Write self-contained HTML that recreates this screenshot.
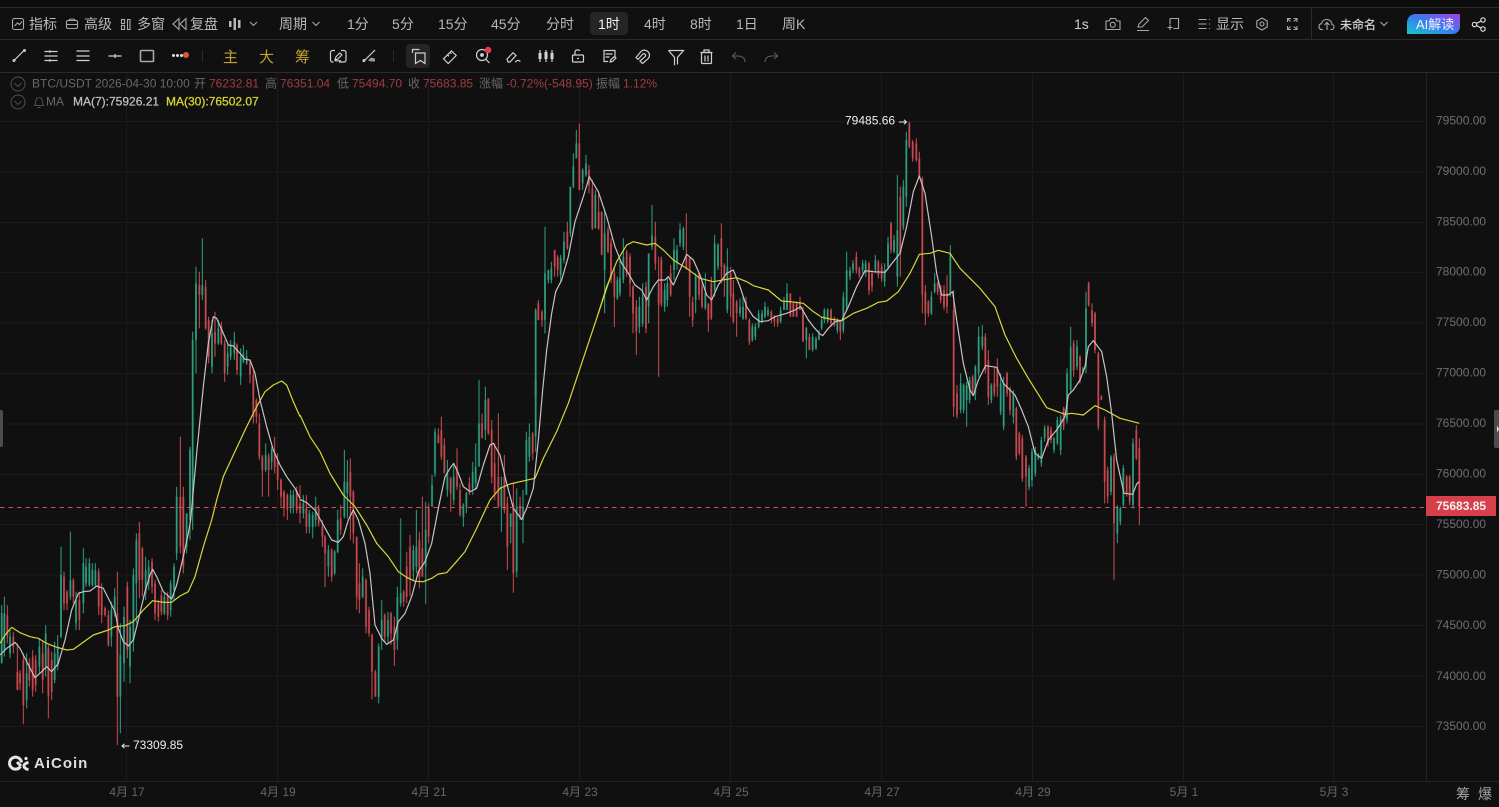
<!DOCTYPE html>
<html lang="zh"><head><meta charset="utf-8"><title>BTC/USDT</title>
<style>
html,body{margin:0;padding:0;background:#101011;width:1499px;height:807px;overflow:hidden}
svg{display:block}
text{font-family:"Liberation Sans","Noto Sans CJK SC",sans-serif}
.t{font-size:14px;fill:#b8b8b8}
.ic{fill:none;stroke:#a8a8a8;stroke-width:1.1}
.id{fill:none;stroke:#d0d0d0;stroke-width:1.2}
.o{font-size:12px;fill:#68686b}
.r{font-size:12px;fill:#a23c40}
.a{font-size:12px;fill:#6f6f74}
.d{font-size:12px;fill:#66666a;text-anchor:middle}
.gw{fill:none;stroke:#2fa385;stroke-width:3}
.gb{fill:none;stroke:#2d9c7f;stroke-width:5.4}
.rw{fill:none;stroke:#cf4c51;stroke-width:3}
.rb{fill:none;stroke:#c6494e;stroke-width:5.4}
.w{fill:none;stroke:#c8c2c4;stroke-width:3.6;stroke-linejoin:round}
.y{fill:none;stroke:#d9d63a;stroke-width:3.6;stroke-linejoin:round}
</style></head><body>
<svg width="1499" height="807" viewBox="0 0 1499 807" xmlns="http://www.w3.org/2000/svg">
<defs>
<linearGradient id="ai" x1="0" y1="1" x2="1" y2="0"><stop offset="0" stop-color="#16c8c8"/><stop offset=".5" stop-color="#3a7cf0"/><stop offset="1" stop-color="#a63ee0"/></linearGradient>
</defs>
<rect width="1499" height="807" fill="#101011"/>
<rect width="1499" height="7" fill="#0d0d0e"/>
<path d="M0 7.500H1499M0 39.500H1499M0 72.500H1499" stroke="#2b2b2c" stroke-width="1"/>
<path d="M1311.500 8V39" stroke="#2b2b2c"/>

<!-- grid -->
<path d="M0 121.500H1426M0 172H1426M0 222.500H1426M0 272.500H1426M0 323H1426M0 373.500H1426M0 424H1426M0 474.500H1426M0 524.500H1426M0 575H1426M0 625.500H1426M0 676H1426M0 726.500H1426M126.500 73V781M277.500 73V781M428.500 73V781M579.500 73V781M730.500 73V781M881.500 73V781M1032.500 73V781M1183.500 73V781M1333.500 73V781" stroke="#1b1b1c" stroke-width="1" fill="none"/>
<path d="M1426.500 73V781M0 781.500H1499" stroke="#232324" stroke-width="1" fill="none"/>

<!-- toolbar row 1 -->
<rect x="590" y="12" width="38" height="23" rx="4" fill="#252526"/>
<g class="ic"><rect x="12.500" y="18.500" width="11" height="11" rx="2"/><path d="M14.500 26l3-3 2 1.500 2.500-3"/></g>
<text class="t" x="29" y="29">指标</text>
<g class="ic"><rect x="66.500" y="20.500" width="11" height="8" rx="1.500"/><path d="M66.500 24.500h11M69 20.500c0-2 6-2 6 0"/></g>
<text class="t" x="84" y="29">高级</text>
<g class="ic"><rect x="121.500" y="19.500" width="3" height="4"/><rect x="121.500" y="25.500" width="3" height="4"/><rect x="127.500" y="19.500" width="2.500" height="10"/></g>
<text class="t" x="137" y="29">多窗</text>
<g class="ic"><path d="M179 18.500l-6 5.500 6 5.500zM186 18.500l-6 5.500 6 5.500z"/></g>
<text class="t" x="190" y="29">复盘</text>
<g fill="#b8b8b8"><rect x="229" y="21" width="2.500" height="6"/><rect x="233.500" y="18" width="2.500" height="12"/><rect x="238" y="20" width="2.500" height="8"/></g>
<path class="ic" d="M250 22l3.500 3.500 3.500-3.500M312.500 22l3.500 3.500 3.500-3.500M1380.500 22l3.500 3.500 3.500-3.500"/>
<text class="t" x="279" y="29">周期</text>
<text class="t" x="347" y="29">1分</text>
<text class="t" x="392" y="29">5分</text>
<text class="t" x="438" y="29">15分</text>
<text class="t" x="491" y="29">45分</text>
<text class="t" x="546" y="29">分时</text>
<text class="t" x="598" y="29" style="fill:#f2f2f2">1时</text>
<text class="t" x="644" y="29">4时</text>
<text class="t" x="690" y="29">8时</text>
<text class="t" x="736" y="29">1日</text>
<text class="t" x="782" y="29">周K</text>
<!-- right of row 1 -->
<text class="t" x="1074" y="29" style="fill:#cfcfcf">1s</text>
<g class="ic"><path d="M1106 21h3l1.500-2.500h5l1.500 2.500h3v8.500h-14z"/><circle cx="1112.800" cy="24.800" r="2.500"/></g>
<path class="ic" d="M1138 27l1-3 6.500-6.500 3 3-6.500 6.500zM1137 30.500h12"/>
<path class="ic" d="M1170 18.500h8.500v10h-5M1170 18.500v6M1167.500 27.500h5M1170 25v5"/>
<path class="ic" d="M1198.500 19.500h8M1198.500 24h8M1198.500 28.500h8M1209 19.500h1M1209 24h1M1209 28.500h1"/>
<text class="t" x="1216" y="29">显示</text>
<g class="ic"><path d="M1262 18l5.200 3v6l-5.200 3-5.200-3v-6z"/><circle cx="1262" cy="24" r="2"/></g>
<path class="ic" d="M1287.500 22v-3.500h3.500M1293.500 18.500h3.500v3.500M1287.500 26v3.500h3.500M1293.500 29.500h3.500V26M1288 19l2.500 2.500M1296.500 19l-2.500 2.500M1288 29l2.500-2.500M1296.500 29l-2.500-2.500"/>
<path class="ic" d="M1323 29.500h-1.500c-2 0-2.500-1.500-2.500-3 0-1.600 1-2.700 2.500-2.800.5-2.500 2.500-4.200 5-4.200 3.200 0 5.500 2.300 5.500 5 1.500.3 2 1.500 2 2.500 0 1.300-1 2.500-2.500 2.500h-1M1327 30v-7.500M1324.500 25l2.500-2.500 2.500 2.500"/>
<text x="1340" y="29" style="font-size:12px;fill:#d4d4d4;stroke:#d4d4d4;stroke-width:.2">未命名</text>
<path d="M1416 14h44v12c0 5-3 8-8 8h-45v-11c0-5 3-9 9-9z" fill="url(#ai)"/>
<text x="1416" y="29" style="font-size:13px;fill:#f4f4ff">AI解读</text>
<g fill="none" stroke="#dcdcdc" stroke-width="1.2"><circle cx="1483" cy="20" r="2.200"/><circle cx="1483" cy="29" r="2.200"/><circle cx="1474.500" cy="24.500" r="2.200"/><path d="M1476.500 23.400l4.600-2.400M1476.500 25.600l4.600 2.400"/></g>

<!-- toolbar row 2 -->
<g class="id">
<path d="M14 60.500l10-10"/><circle cx="14" cy="60.500" r=".9"/><circle cx="24.500" cy="50.500" r=".9"/>
<path d="M44.500 51.500h13M44.500 56h13M44.500 60.500h13"/><path d="M50 50.500v2M50 59.500v2" stroke-width="2"/>
<path d="M76.500 51h13M76.500 56h13M76.500 60.500h13"/>
<path d="M108.500 56h13M115 54v4"/>
<rect x="140.500" y="50.500" width="13" height="11" rx="1" stroke="#a8a8a8" stroke-width="1.600"/>
</g>
<g fill="#e0e0e0"><circle cx="173.500" cy="55.500" r="1.500"/><circle cx="177.500" cy="55.500" r="1.500"/><circle cx="181.500" cy="55.500" r="1.500"/></g>
<circle cx="186" cy="55" r="3" fill="#e5533c"/>
<path d="M202.500 50v12M393.500 50v12" stroke="#2c2c2d"/>
<text x="223" y="62" style="font-size:15px;fill:#bfa030">主</text>
<text x="259" y="62" style="font-size:15px;fill:#bfa030">大</text>
<text x="295" y="62" style="font-size:15px;fill:#bfa030">筹</text>
<g class="id">
<path d="M335 50.500h-2.500a2 2 0 0 0-2 2v7.500a2 2 0 0 0 2 2h1M341 50.500h3a2 2 0 0 1 2 2v7.500a2 2 0 0 1-2 2h-5"/>
<path d="M335 60l.8-3 4-4 2 2-4 4zM335 60.800h6"/>
<path d="M363 62l12-12" /><circle cx="364" cy="60.500" r=".9"/>
<path d="M368 60.500l3-3 4 1v3h-4z" fill="#999" stroke="none"/>
</g>
<rect x="406" y="44" width="24" height="24" rx="4" fill="#252526"/>
<g class="id">
<path d="M412.500 53v-3.500h7M415.500 53h9.500v10.500l-4.500-3-5 3z"/>
<path d="M443.500 58.800l8-8 4.700 4.700-8 8z"/><path d="M447.500 54.800l1.500 1.500M450 52.300l1.500 1.500"/>
<circle cx="482" cy="55" r="5.500"/><path d="M486 59.500l3.500 3.500"/><circle cx="482" cy="55" r="1.300" fill="#d4d4d4"/>
<path d="M508 62l-1-2.800 6-6.500 3 2.800-6 6.500zM515 61.800c1.500 0 1.500-1.500 3-1.500s1 1 2.500 1"/>
<path d="M540 50v12M546 50v12M552 50v12"/>
</g>
<g fill="#d4d4d4"><rect x="538.500" y="53" width="3" height="6"/><rect x="544.500" y="52" width="3" height="7"/><rect x="550.500" y="53" width="3" height="6"/></g>
<circle cx="488" cy="50" r="3.300" fill="#e8394a"/>
<g class="id">
<rect x="572.500" y="55" width="11" height="7" rx=".8"/><path d="M575 55v-3c0-2 3-3 5-1.200"/><path d="M577 58.500h2"/>
<path d="M615 57v-6.500h-11v11h4M605.500 54h7M605.500 57h4M610 62l1-2.500 3.500-3 1.500 1.500-3.500 3.500z"/>
<path d="M636 57.500l5-6c2-2 5-1.800 7 .2s2 5 0 7l-5.500 4.800-2.500-2.500 5-4.300c1-1 .7-1.800 0-2.500s-1.500-.8-2.500.2l-4.500 5z"/>
<path d="M668.500 50.500h15l-6 6.800v7.200M668.500 50.500l6 6.800v8"/>
<rect x="701.500" y="52.500" width="10" height="11" rx="1"/><path d="M700.500 52.500h12M704 52.500v-2.500h5v2.500M705 55.500v6M708 55.500v6"/>
</g>
<path d="M745 62c0-4-3-6-7-6h-5M736 52.500l-3.500 3.500 3.500 3" fill="none" stroke="#5e5e60" stroke-width="1.100"/>
<path d="M765 62c0-4 3-6 7-6h5M774 52.500l3.500 3.500-3.500 3" fill="none" stroke="#5e5e60" stroke-width="1.100"/>

<g style="filter:blur(.3px)">
<!-- candles -->
<g transform="translate(0,520) scale(.33333)">
<path class="gw" d="M5 255V430M13 230V410M30 330V415M80 400V565M118 355V460M137 315V470M164 365V490M173 345V450M183 80V355M211 35V240M228 215V330M250 85V280M258 115V200M268 115V200M277 130V200M286 130V200M334 245V380M344 205V290M361 310V640M372 260V485M390 300V490M400 145V395M409 40V310M437 110V240M446 120V210M493 215V285M512 180V290M522 130V240"/>
<path class="gb" d="M5 280V430M13 280V390M30 350V400M80 460V540M118 380V440M137 340V440M164 400V480M173 380V440M183 165V350M211 180V230M228 240V310M250 130V250M258 140V190M268 130V195M277 150V195M286 150V195M334 270V350M344 230V280M361 405V530M372 290V430M390 320V440M400 165V360M409 60V190M437 150V220M446 140V190M493 230V280M512 190V270M522 140V210"/>
<path class="rw" d="M22 255V370M40 335V400M52 370V510M60 450V510M70 400V612M88 415V500M98 390V530M107 405V515M128 365V520M145 375V595M155 395V540M192 155V270M201 210V270M220 175V250M238 215V330M296 145V285M305 190V310M315 260V290M325 270V380M352 155V675M382 185V415M418 5V235M427 80V230M456 115V220M465 180V300M475 240V305M484 210V285M503 215V300"/>
<path class="rb" d="M22 285V350M40 350V380M52 455V510M60 460V490M70 420V555M88 430V480M98 410V510M107 420V495M128 400V480M145 385V530M155 420V515M192 170V250M201 215V250M220 180V230M238 240V300M296 155V260M305 210V285M315 265V285M325 285V375M352 280V530M382 200V390M418 40V180M427 85V180M456 125V200M465 190V280M475 250V290M484 225V275M503 230V285"/>
</g>
<g transform="translate(0,220) scale(.33333)">
<path class="gw" d="M530 800V1020M560 880V1000M570 680V960M578 335V930M588 140V460M607 55V240M636 300V460M655 300V375M683 375V465M692 360V420M703 335V420M722 385V495M730 375V430M740 390V435M797 670V755M815 680V750M872 810V880M880 810V880"/>
<path class="gb" d="M530 830V1000M560 880V980M570 690V900M578 360V870M588 190V360M607 195V225M636 340V440M655 325V370M683 400V440M692 375V410M703 365V400M722 410V470M730 400V425M740 410V430M797 705V750M815 690V725M872 825V860M880 825V860"/>
<path class="rw" d="M541 650V1000M550 800V1060M598 155V325M617 180V330M626 290V430M645 275V410M664 305V375M674 360V485M711 370V465M750 420V490M760 450V610M769 535V610M778 580V720M787 705V830M806 700V830M824 650V760M833 700V810M843 775V860M852 810V890M862 820V900M890 800V880"/>
<path class="rb" d="M541 830V980M550 830V1040M598 195V225M617 200V325M626 300V410M645 335V370M664 320V370M674 370V460M711 375V450M750 430V465M760 465V590M769 540V590M778 610V710M787 710V750M806 710V750M824 700V740M833 725V780M843 780V830M852 815V860M862 825V870M890 810V870"/>
</g>
<g transform="translate(300,380) scale(.33333)">
<path class="gw" d="M10 345V415M28 390V460M38 395V475M47 350V440M85 495V590M104 510V585M113 390V520M133 210V415M142 240V415M188 565V655M236 790V970M245 660V810M264 695V790M292 620V810M302 415V680M340 495V600M349 390V580M377 365V672M396 285V380M405 145V290M442 240V350M461 250V375M490 370V440M499 335V400M518 245V345M527 190V330M537 0V260M556 20V180M604 290V455M632 400V490M650 325V592M669 330V490M679 155V345M688 130V245M707 0V215"/>
<path class="gb" d="M10 370V400M28 400V440M38 405V440M47 385V420M85 510V560M104 515V580M113 420V515M133 305V410M142 305V340M188 590V650M236 800V950M245 720V780M264 720V770M292 650V780M302 640V670M340 510V570M349 500V560M377 450V560M396 315V380M405 155V280M442 280V330M461 290V360M490 375V410M499 340V380M518 275V325M527 260V310M537 130V260M556 60V150M604 320V380M632 400V440M650 380V575M669 380V420M679 180V345M688 170V230M707 0V170"/>
<path class="rw" d="M0 315V430M19 345V460M56 375V440M67 420V500M75 465V622M95 505V605M122 375V465M151 235V480M160 330V490M170 470V690M178 550V700M198 595V760M207 680V770M216 760V958M226 870V950M254 700V785M273 695V795M283 710V858M311 630V680M320 515V670M330 465V650M358 455V625M367 350V590M386 370V490M415 145V190M424 110V240M433 175V280M452 290V395M471 205V330M480 310V410M508 290V345M546 100V175M565 55V165M575 120V310M584 190V360M595 100V385M613 225V400M622 350V570M640 310V638M660 350V420M698 155V240"/>
<path class="rb" d="M0 370V400M19 385V440M56 385V430M67 440V470M75 470V520M95 510V590M122 415V450M151 275V350M160 335V460M170 470V650M178 610V660M198 600V740M207 690V760M216 765V875M226 875V950M254 705V770M273 700V760M283 740V810M311 635V665M320 560V650M330 500V600M358 480V590M367 505V590M386 385V470M415 165V190M424 150V230M433 195V280M452 295V340M471 260V320M480 330V405M508 310V340M546 130V175M565 55V160M575 150V290M584 250V340M595 290V380M613 290V390M622 370V500M640 370V580M660 375V410M698 160V220"/>
</g>
<g transform="translate(520,110) scale(.33333)">
<path class="gw" d="M47 595V860M75 350V670M85 480V520M94 455V520M122 435V520M132 365V460M151 230V380M160 130V235M169 60V145M188 175V240M198 135V200M226 240V355M254 300V610M292 500V570M300 450V560M310 385V520M358 560V670M368 520V650M386 430V640M396 285V420M434 520V605M442 500V590M462 385V510M471 405V480M480 340V410M490 350V420M527 490V610M556 490V600M584 375V560M594 400V480M622 415V610M660 565V620M669 560V630M697 640V695M706 640V690M716 600V655M726 600V640M735 575V625M744 590V620M782 590V640M792 560V600M801 520V600M859 650V745M878 670V725M888 680V720M897 660V690"/>
<path class="gb" d="M47 600V860M75 490V630M85 480V510M94 475V510M122 445V495M132 395V450M151 230V370M160 170V230M169 100V145M188 180V220M198 160V195M226 255V355M254 370V480M292 510V565M300 505V550M310 440V510M358 590V650M368 560V640M386 430V590M396 375V410M434 540V590M442 520V570M462 420V480M471 420V460M480 360V400M490 355V410M527 500V570M556 550V595M584 400V540M594 405V470M622 470V600M660 590V610M669 590V625M697 650V690M706 650V680M716 610V650M726 610V635M735 590V620M744 600V615M782 600V635M792 575V600M801 550V600M859 655V690M878 680V720M888 685V715M897 670V690"/>
<path class="rw" d="M55 570V630M66 600V650M104 420V500M113 435V500M142 335V420M178 40V240M207 165V250M217 210V360M236 250V360M245 305V435M264 350V430M273 385V520M283 470V650M320 420V500M330 430V560M339 525V670M349 570V735M378 515V670M406 335V480M416 440V800M424 440V590M452 465V560M499 310V480M509 440V620M518 560V650M537 490V570M546 515V595M565 580V665M574 500V630M604 340V520M613 460V560M632 470V620M640 510V640M650 570V680M678 560V630M688 625V705M754 600V640M763 615V650M773 620V650M811 550V620M820 575V620M830 575V620M840 560V600M849 590V695M868 670V720"/>
<path class="rb" d="M55 580V630M66 605V630M104 420V470M113 440V480M142 365V415M178 100V240M207 180V225M217 235V355M236 305V355M245 305V435M264 360V425M273 400V510M283 490V560M320 425V490M330 440V520M339 530V610M349 590V665M378 530V655M406 380V460M416 520V585M424 450V580M452 490V555M499 440V475M509 445V560M518 575V630M537 490V555M546 530V590M565 580V630M574 520V625M604 385V470M613 465V510M632 490V560M640 550V635M650 575V610M678 575V625M688 630V695M754 605V625M763 620V635M773 625V640M811 550V620M820 580V620M830 580V620M840 575V600M849 600V695M868 680V720"/>
</g>
<g transform="translate(820,110) scale(.33333)">
<path class="gw" d="M5 620V660M13 595V640M23 595V640M52 625V670M70 545V670M80 425V600M90 470V510M99 450V490M128 450V490M137 450V500M166 435V490M194 460V530M204 380V480M222 375V430M232 195V530M250 210V360M259 65V290M334 545V615M344 490V550M391 405V560M422 790V910M431 820V910M440 815V950M449 800V880M466 765V870M476 650V800M487 645V720M514 820V880M542 790V915M551 800V960M580 840V940M627 1065V1140M636 1015V1130M646 1010V1100M655 1030V1050M664 980V1070M674 945V995M702 980V1030M712 920V1005M722 915V1035M741 775V940M752 650V850M771 690V780M789 770V790M798 545V790M873 1035V1155M892 1185V1300M901 1190V1245M910 1065V1190M939 985V1195"/>
<path class="gb" d="M5 630V655M13 600V630M23 600V635M52 635V660M70 560V660M80 480V590M90 480V500M99 460V480M128 460V480M137 460V490M166 450V480M194 480V515M204 400V470M222 390V425M232 360V500M250 230V350M259 90V260M334 560V610M344 520V545M391 430V550M422 820V900M431 825V900M440 825V870M449 810V870M466 770V850M476 680V790M487 680V710M514 825V870M542 820V905M551 820V950M580 850V920M627 1075V1130M636 1025V1110M646 1020V1090M655 1035V1045M664 990V1060M674 955V985M702 985V1020M712 930V1000M722 925V1020M741 790V930M752 710V840M771 710V770M789 775V785M798 595V770M873 1040V1145M892 1190V1270M901 1195V1235M910 1075V1185M939 1000V1185"/>
<path class="rw" d="M33 595V650M43 620V650M61 630V690M109 425V490M118 470V505M147 455V555M156 480V545M175 450V505M185 460V515M213 335V430M241 230V500M268 35V115M278 90V155M289 85V155M298 125V205M307 200V610M316 525V645M325 570V620M353 515V555M362 525V580M372 525V600M381 495V610M401 540V920M411 825V925M458 795V855M496 670V790M505 720V885M523 770V860M532 745V860M561 785V860M570 830V915M589 890V1050M598 965V1035M607 975V1115M618 1035V1190M684 945V1010M693 950V1000M731 890V960M761 690V800M780 735V820M806 515V590M816 580V650M825 605V730M835 725V960M844 855V870M854 920V1180M863 1070V1180M882 1030V1410M920 1095V1160M929 1095V1185M949 945V1050M958 985V1245"/>
<path class="rb" d="M33 600V640M43 625V645M61 635V665M109 440V480M118 475V495M147 460V540M156 490V530M175 455V495M185 470V505M213 340V420M241 260V430M268 40V110M278 95V145M289 100V150M298 145V205M307 205V555M316 545V610M325 575V610M353 520V545M362 530V570M372 540V590M381 550V590M401 600V890M411 850V915M458 800V845M496 680V780M505 750V860M523 820V850M532 770V830M561 790V850M570 835V900M589 895V1040M598 970V1030M607 985V1105M618 1040V1100M684 950V1000M693 960V990M731 895V950M761 700V780M780 740V810M806 520V585M816 600V640M825 610V720M835 730V950M844 860V870M854 930V1115M863 1080V1160M882 1040V1240M920 1100V1150M929 1100V1175M949 960V1045M958 1015V1190"/>
</g>

<!-- MA30 -->
<g transform="translate(0,520) scale(.33333)"><polyline class="y" points="0,370 15,345 35,322 60,338 90,350 115,355 140,370 165,380 200,390 220,388 245,370 280,345 325,330 345,320 375,317 400,305 430,270 458,242 490,247 515,247 540,228 565,215 585,170 610,80 635,0"/></g>
<g transform="translate(0,220) scale(.33333)"><polyline class="y" points="635,900 650,840 670,770 700,705 740,620 770,560 795,515 820,495 845,483 860,495 880,545 900,590"/></g>
<g transform="translate(300,380) scale(.33333)"><polyline class="y" points="0,105 30,170 60,215 90,280 130,345 165,380 200,435 230,490 265,530 295,575 320,592 345,604 370,605 395,595 415,582 440,578 465,550 495,515 530,445 570,360 600,325 630,312 660,305 705,295 730,235 770,155 805,70 845,-50 875,-140 905,-230 935,-320"/></g>
<g transform="translate(520,110) scale(.33333)"><polyline class="y" points="235,610 260,530 290,455 320,405 340,395 380,405 405,400 430,420 460,450 500,475 540,505 580,515 620,508 650,503 680,515 700,527 745,540 785,573 810,575 850,580 880,605 900,618"/></g>
<g transform="translate(820,110) scale(.33333)"><polyline class="y" points="0,620 30,627 65,632 100,610 140,595 175,577 200,573 235,545 270,490 298,433 330,430 355,421 390,430 420,475 480,535 525,590 555,675 590,745 625,805 680,893 735,913 755,910 790,915 825,887 855,900 900,925 958,940"/></g>

<!-- MA7 -->
<g transform="translate(0,520) scale(.33333)"><polyline class="w" points="0,405 20,385 45,367 60,385 80,425 105,473 125,455 140,440 155,455 175,430 195,360 215,270 235,220 250,215 270,213 290,198 310,205 330,245 345,275 355,325 370,365 385,378 400,360 415,300 435,215 450,165 458,148 470,170 490,215 515,237 530,195 550,110 565,40 572,0"/></g>
<g transform="translate(0,220) scale(.33333)"><polyline class="w" points="572,900 590,700 610,500 625,370 640,290 650,295 670,340 685,375 700,378 720,400 735,418 750,420 765,460 780,540 800,620 820,690 840,735 860,770 885,805 900,835"/></g>
<g transform="translate(300,380) scale(.33333)"><polyline class="w" points="0,358 20,368 45,390 70,435 95,480 115,487 130,470 145,420 160,390 175,420 195,490 210,580 225,735 245,775 260,793 280,780 295,725 315,700 335,650 355,575 375,545 395,490 415,385 435,290 450,265 461,250 475,280 490,320 510,335 530,325 550,255 570,195 580,190 600,225 620,310 640,385 665,418 680,385 700,325 715,180 728,30"/></g>
<g transform="translate(520,110) scale(.33333)"><polyline class="w" points="68,840 80,720 95,610 107,545 125,510 145,440 165,335 190,260 208,200 235,245 260,320 285,410 305,460 325,490 345,525 365,540 380,570 400,530 415,510 435,510 445,500 460,525 480,480 500,433 520,450 540,495 560,555 575,570 595,525 620,490 640,480 660,530 680,590 700,620 720,635 745,632 765,620 800,610 825,600 842,590 865,630 880,650 900,672"/></g>
<g transform="translate(820,110) scale(.33333)"><polyline class="w" points="0,672 8,677 25,655 45,635 65,632 85,590 110,530 135,482 160,485 195,487 220,455 240,430 260,350 280,245 298,198 315,250 335,380 350,490 365,555 385,555 398,545 410,630 430,760 450,840 460,857 475,810 497,767 530,772 550,820 585,855 605,900 625,950 645,1030 665,1045 685,990 710,960 735,920 745,855 760,840 780,810 795,770 805,710 820,692 845,725 860,800 875,910 890,1050 912,1150 938,1153 950,1122 958,1115"/></g>
</g>

<!-- current price dashed -->
<path d="M0 507.500H1426" stroke="#d24f5c" stroke-width="1" stroke-dasharray="4.500 4" fill="none"/>
<path d="M1426 507.500H1432" stroke="#ddd" stroke-width="1"/>

<!-- info rows -->
<g fill="none" stroke="#4e4e50" stroke-width="1"><circle cx="18" cy="84" r="7"/><path d="M14.500 83l3.500 3.500 3.500-3.500"/><circle cx="18" cy="102" r="7"/><path d="M14.500 101l3.500 3.500 3.500-3.500"/><path d="M34.500 105.500c1.500-1.500 1-3 1.300-5 .3-1.500 1.500-2.700 3.200-2.700s2.900 1.200 3.200 2.700c.3 2 0 3.500 1.300 5zM37.500 107.500h3"/></g>
<text class="o" x="32" y="87.500">BTC/USDT</text>
<text class="o" x="95" y="87.500">2026-04-30 10:00</text>
<text class="o" x="194" y="87.500">开</text><text class="r" x="209" y="87.500">76232.81</text>
<text class="o" x="265" y="87.500">高</text><text class="r" x="280" y="87.500">76351.04</text>
<text class="o" x="337" y="87.500">低</text><text class="r" x="352" y="87.500">75494.70</text>
<text class="o" x="408" y="87.500">收</text><text class="r" x="423" y="87.500">75683.85</text>
<text class="o" x="479" y="87.500">涨幅</text><text class="r" x="506" y="87.500">-0.72%(-548.95)</text>
<text class="o" x="596" y="87.500">振幅</text><text class="r" x="623" y="87.500">1.12%</text>
<text class="o" x="46" y="105.500">MA</text>
<text x="73" y="105.500" style="font-size:12px;fill:#c0c0c0;stroke:#c0c0c0;stroke-width:.25">MA(7):75926.21</text>
<text x="166" y="105.500" style="font-size:12px;fill:#d4d42e;stroke:#d4d42e;stroke-width:.3">MA(30):76502.07</text>

<!-- labels -->
<text x="845" y="124.500" style="font-size:12px;fill:#f0f0f0">79485.66</text>
<path d="M899 122h7.500M904 119.800l2.500 2.200-2.500 2.200" fill="none" stroke="#e8e8e8" stroke-width="1"/>
<text x="133" y="749" style="font-size:12px;fill:#f0f0f0">73309.85</text>
<path d="M129.500 746h-7.500M124.500 743.800l-2.500 2.200 2.500 2.200" fill="none" stroke="#e8e8e8" stroke-width="1"/>

<!-- axis -->
<text class="a" x="1436" y="124.500">79500.00</text>
<text class="a" x="1436" y="175">79000.00</text>
<text class="a" x="1436" y="225.500">78500.00</text>
<text class="a" x="1436" y="275.500">78000.00</text>
<text class="a" x="1436" y="326">77500.00</text>
<text class="a" x="1436" y="376.500">77000.00</text>
<text class="a" x="1436" y="427">76500.00</text>
<text class="a" x="1436" y="477.500">76000.00</text>
<text class="a" x="1436" y="528">75500.00</text>
<text class="a" x="1436" y="578.500">75000.00</text>
<text class="a" x="1436" y="629">74500.00</text>
<text class="a" x="1436" y="680">74000.00</text>
<text class="a" x="1436" y="730">73500.00</text>
<rect x="1426" y="496" width="70" height="20" fill="#d5404a"/>
<text x="1436" y="510" style="font-size:12px;font-weight:700;fill:#f7f0f0">75683.85</text>

<text class="d" x="127" y="796">4月 17</text>
<text class="d" x="278" y="796">4月 19</text>
<text class="d" x="429" y="796">4月 21</text>
<text class="d" x="580" y="796">4月 23</text>
<text class="d" x="731" y="796">4月 25</text>
<text class="d" x="882" y="796">4月 27</text>
<text class="d" x="1033" y="796">4月 29</text>
<text class="d" x="1184" y="796">5月 1</text>
<text class="d" x="1334" y="796">5月 3</text>
<text x="1456" y="799" style="font-size:14px;fill:#a4a4a4">筹</text>
<text x="1478" y="799" style="font-size:14px;fill:#a4a4a4">爆</text>

<!-- side handles -->
<rect x="-3" y="410" width="6" height="37" rx="2" fill="#4c4c4e"/>
<rect x="1494" y="410" width="8" height="38" rx="2" fill="#4c4c4e"/>
<path d="M1497 425.500l2 3.500-2 3.500z" fill="#e8e8e8"/>

<!-- logo -->
<g fill="none" stroke="#e6e6e6" stroke-width="3"><path d="M20.500 766.500a6 6 0 1 1 1-4"/><path d="M17 762l4 4"/><path d="M28.500 762.500c-3 .5-4.500 2-4.500 3.500s1.500 3 4.500 3.500"/></g>
<circle cx="26" cy="758.500" r="1.600" fill="#e6e6e6"/>
<text x="34" y="768" style="font-size:15px;font-weight:700;letter-spacing:1px;fill:#dedede">AiCoin</text>
</svg>
</body></html>
